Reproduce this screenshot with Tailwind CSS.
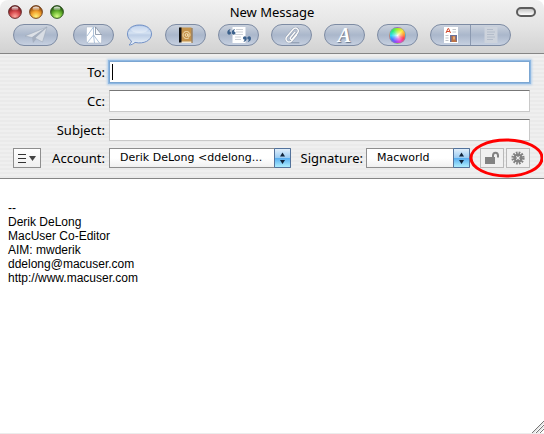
<!DOCTYPE html>
<html lang="en">
<head>
<meta charset="utf-8">
<meta name="viewport" content="width=device-width, initial-scale=1">
<title>New Message</title>
<script src="https://cdn.jsdelivr.net/npm/@tailwindcss/browser@4"></script>
</head>
<body class="bg-white">
<main class="flex h-screen flex-col overflow-hidden bg-white font-['Noto_Sans','Open_Sans',sans-serif] text-[13px] text-black">

  <header class="rounded-t-lg border-b border-[#858585] bg-linear-to-b from-[#f1f1f1] via-[#e4e4e4] to-[#d2d2d2]">
    <div class="grid h-6 grid-cols-[1fr_auto_1fr] items-center px-2">
      <div class="flex gap-[7px]">
        <button aria-label="Close" class="size-[14px]"><svg viewBox="0 0 14 14" class="block size-full">
          <defs>
            <radialGradient id="red" cx=".5" cy=".85" r=".8"><stop offset="0" stop-color="#ffaaa0"/><stop offset=".5" stop-color="#d6484b"/><stop offset="1" stop-color="#641114"/></radialGradient>
            <radialGradient id="amber" cx=".5" cy=".85" r=".8"><stop offset="0" stop-color="#fff27c"/><stop offset=".5" stop-color="#f2a02c"/><stop offset="1" stop-color="#7a3407"/></radialGradient>
            <radialGradient id="green" cx=".5" cy=".85" r=".8"><stop offset="0" stop-color="#d5ff86"/><stop offset=".5" stop-color="#68b52f"/><stop offset="1" stop-color="#144406"/></radialGradient>
            <linearGradient id="shine" x2="0" y2="1"><stop offset="0" stop-color="#fff" stop-opacity=".95"/><stop offset="1" stop-color="#fff" stop-opacity=".1"/></linearGradient>
          </defs>
          <circle cx="7" cy="7" r="6.4" fill="url(#red)" stroke="#5b2525" stroke-width=".9"/><ellipse cx="7" cy="3.5" rx="3.4" ry="2" fill="url(#shine)"/></svg></button>
        <button aria-label="Minimize" class="size-[14px]"><svg viewBox="0 0 14 14" class="block size-full"><circle cx="7" cy="7" r="6.4" fill="url(#amber)" stroke="#6b3d18" stroke-width=".9"/><ellipse cx="7" cy="3.5" rx="3.4" ry="2" fill="url(#shine)"/></svg></button>
        <button aria-label="Zoom" class="size-[14px]"><svg viewBox="0 0 14 14" class="block size-full"><circle cx="7" cy="7" r="6.4" fill="url(#green)" stroke="#284e1a" stroke-width=".9"/><ellipse cx="7" cy="3.5" rx="3.4" ry="2" fill="url(#shine)"/></svg></button>
      </div>
      <h1 class="leading-5">New Message</h1>
      <button aria-label="Hide toolbar" class="h-[10px] w-5 justify-self-end rounded-full border-2 border-[#5c5c5c] bg-linear-to-b from-[#c4c4c4] to-white"></button>
    </div>

    <nav aria-label="Toolbar" class="flex gap-3 px-[13px] pb-[7px]">
      <button aria-label="Send" class="mr-[3px] flex h-[22px] w-[45px] items-center justify-center rounded-full border border-[#7d8ba3] bg-linear-to-b from-[#cbd2dd] from-0% via-[#aab7cb] via-50% to-[#c6d0e0]">
        <svg viewBox="0 0 24 18" class="h-[18px] w-6"><path d="M23 1 1 10l7 1.500z" fill="#dde1e7" stroke="#98a4b5" stroke-width=".5"/><path d="M23 1 8 11.500 9 17l3-3.500z" fill="#a5afbf"/><path d="M23 1 11 12l7.500 4z" fill="#d8dde4" stroke="#98a4b5" stroke-width=".5"/></svg>
      </button>
      <button aria-label="Chat invitation" class="flex h-[22px] w-[41px] items-center justify-center rounded-full border border-[#7d8ba3] bg-linear-to-b from-[#cbd2dd] from-0% via-[#aab7cb] via-50% to-[#c6d0e0]">
        <svg viewBox="0 0 18 18" class="size-[18px]"><path d="M1.500 1H11l5.500 6.500V17h-15z" fill="#fff" stroke="#a9b5c7" stroke-width=".5"/><path d="M8.500 1 2 10M2 17l6.500-8 6 8M8.500 1v8l1 8" stroke="#9bb4d1" stroke-width=".8" fill="none"/><path d="M10.500 1v7.500h6z" fill="#f5f8fc" stroke="#6d7d92" stroke-width=".7"/></svg>
      </button>
      <button aria-label="Chat" class="h-[22px] w-[27px]">
        <svg viewBox="0 0 27 22" class="block size-full"><defs><linearGradient id="bubble" x2="0" y2="1"><stop offset="0" stop-color="#9db9e3"/><stop offset=".4" stop-color="#d5e2f2"/><stop offset=".5" stop-color="#bdcee6"/><stop offset="1" stop-color="#edf4fb"/></linearGradient></defs><path d="M13.500 1C6 1 1.500 5 1.500 10c0 3 1.500 5.500 4 7-.3 1.500-1.200 3-2.500 4 2.500 0 4.600-1.200 6-2.600 9 2 16.500-2 16.500-8.400C25.500 5 21 1 13.500 1z" fill="url(#bubble)" stroke="#7291c6" stroke-width="1"/><ellipse cx="13.500" cy="5.500" rx="8.500" ry="3.500" fill="#fff" opacity=".35"/></svg>
      </button>
      <button aria-label="Address book" class="flex h-[22px] w-[41px] items-center justify-center rounded-full border border-[#7d8ba3] bg-linear-to-b from-[#cbd2dd] from-0% via-[#aab7cb] via-50% to-[#c6d0e0]">
        <svg viewBox="0 0 16 18" class="h-[18px] w-4"><path d="M2 1.500h11.500v15H2z" fill="#c3924b"/><path d="M2 15.500h12v1.500H2z" fill="#f2ead8"/><path d="M13.500 2h1v15h-1z" fill="#8c6530"/><path d="M1 1.500h2.500v15H1z" fill="#111"/><g fill="none" stroke="#f7e6bd" stroke-width=".9"><circle cx="8.500" cy="9" r="1.400"/><path d="M10 7.500v2.300c.2 1.500 2 .8 2-.8 0-2.200-1.500-3.500-3.500-3.500S5 6.800 5 9s1.500 3.500 3.500 3.500c1 0 1.800-.2 2.500-.7"/></g></svg>
      </button>
      <button aria-label="Quote selection" class="flex h-[22px] w-[41px] items-center justify-center rounded-full border border-[#7d8ba3] bg-linear-to-b from-[#cbd2dd] from-0% via-[#aab7cb] via-50% to-[#c6d0e0]">
        <svg viewBox="0 0 24 18" class="h-[18px] w-6"><path d="M5.500 1h13v16h-13z" fill="#fff"/><path d="M9 3.500h7M9 6h7M8 8.500h8M8 11h6M8 13.500h6" stroke="#c6cad0" stroke-width=".9"/><path d="M3.500 3C1.500 3.300.3 4.700.3 6.500c0 1.300.8 2.200 1.800 2.200S4 8 4 7s-.7-1.500-1.600-1.500C2.500 4.600 3.200 4 3.500 3zM8 3C6 3.300 4.800 4.700 4.800 6.500c0 1.300.8 2.200 1.800 2.200S8.500 8 8.500 7s-.7-1.500-1.600-1.500C7 4.600 7.700 4 8 3zM16.500 16c2-.3 3.200-1.700 3.200-3.500 0-1.300-.8-2.200-1.800-2.200S16 11 16 12s.7 1.500 1.600 1.500c-.1.900-.8 1.500-1.100 2.500zM20.800 16c2-.3 3.200-1.700 3.200-3.500 0-1.300-.8-2.200-1.800-2.200s-1.900.7-1.900 1.700.7 1.500 1.600 1.500c-.1.900-.8 1.500-1.100 2.500z" fill="#3c618c"/></svg>
      </button>
      <button aria-label="Attach" class="flex h-[22px] w-[41px] items-center justify-center rounded-full border border-[#7d8ba3] bg-linear-to-b from-[#cbd2dd] from-0% via-[#aab7cb] via-50% to-[#c6d0e0]">
        <svg viewBox="0 0 18 18" class="size-[18px]" fill="none" stroke-linecap="round"><path d="M7 16.800h9" stroke="#8593a8"/><path d="M12 6 7.500 11.500c-1 1.400.8 2.800 2 1.500L14.500 7C17 3.500 12.800.3 10 3.500L4 10.500c-3 4 2 7.500 5 4L13.500 9" stroke="#8793a6" stroke-width="2.200"/><path d="M12 6 7.500 11.500c-1 1.400.8 2.800 2 1.500L14.500 7C17 3.500 12.800.3 10 3.500L4 10.500c-3 4 2 7.500 5 4L13.500 9" stroke="#fafafa" stroke-width="1.500"/></svg>
      </button>
      <button aria-label="Fonts" class="flex h-[22px] w-[41px] items-center justify-center rounded-full border border-[#7d8ba3] bg-linear-to-b from-[#cbd2dd] from-0% via-[#aab7cb] via-50% to-[#c6d0e0] font-['Liberation_Serif',serif] text-xl leading-5 font-bold text-white italic text-shadow-[1px_1px_1px_#66758c]">A</button>
      <button aria-label="Colors" class="flex h-[22px] w-[41px] items-center justify-center rounded-full border border-[#7d8ba3] bg-linear-to-b from-[#cbd2dd] from-0% via-[#aab7cb] via-50% to-[#c6d0e0]">
        <span class="size-[17px] rounded-full border border-[#8b8fa5]/60 bg-[radial-gradient(circle,#ffffffee_0%,#ffffff66_30%,transparent_60%),conic-gradient(#a4ee20,#ffe838_45deg,#ff9a30_80deg,#ff3d53_115deg,#ee43ce_155deg,#9646f5_195deg,#407aff_235deg,#27d9f0_270deg,#27ec72_315deg,#a4ee20)]"></span>
      </button>
      <div class="flex h-[22px] w-[81px] divide-x divide-[#8b99b0] rounded-full border border-[#7d8ba3] bg-linear-to-b from-[#cbd2dd] from-0% via-[#aab7cb] via-50% to-[#c6d0e0]">
        <button aria-label="Rich text" class="flex flex-1 items-center justify-center">
          <svg viewBox="0 0 14 18" class="h-[18px] w-[14px]"><path d="M0 1h14v16H0z" fill="#fff"/><path d="m2 7 2-4.500h.6L6.500 7M2.800 5.500h3" fill="none" stroke="#d34a2d" stroke-width="1"/><path d="M8.500 3.500H12M8.500 6H12M1.500 9.500h3M1.500 12h3M1.500 14.500h3" stroke="#b9bcc2" stroke-width=".9"/><path d="M6 9h7v7H6z" fill="#69719b"/><path d="M7.500 10h4v3l1.500 3H7.500z" fill="#bd7245"/><path d="M9 10.500h2v3H9z" fill="#e7aa77"/></svg>
        </button>
        <button aria-label="Plain text" class="flex flex-1 items-center justify-center">
          <svg viewBox="0 0 14 18" class="h-[18px] w-[14px]"><path d="M.5 1h13v16H.5z" fill="#cdd3dc"/><path d="M3 3.500h6M3 6h8M3 8.500h7M3 11h8M3 13.500h6" stroke="#b0b9c7" stroke-width=".9"/></svg>
        </button>
      </div>
    </nav>
  </header>

  <form class="flex flex-col gap-[7px] border-b border-[#858585] bg-[repeating-linear-gradient(to_bottom,#efefef_0px,#efefef_2px,#eaeaea_2px,#eaeaea_4px)] pt-[7px] pr-[14px] pb-[10px] pl-[13px]">
    <div class="grid grid-cols-[92px_1fr] items-center gap-1">
      <label for="to" class="text-right leading-5">To:</label>
      <div class="relative">
        <input id="to" type="text" class="block h-[22px] w-full border border-[#7ba6d2] bg-white px-1 shadow-[0_0_0_1px_#8fb8e2,0_0_2px_2px_#b4d0ec] outline-none">
        <span class="pointer-events-none absolute top-[3px] left-[3px] h-4 w-px bg-black"></span>
      </div>
    </div>
    <div class="grid grid-cols-[92px_1fr] items-center gap-1">
      <label for="cc" class="text-right leading-5">Cc:</label>
      <input id="cc" type="text" class="h-[22px] w-full border border-[#c9c9c9] border-t-[#777] bg-white px-1 outline-none">
    </div>
    <div class="grid grid-cols-[92px_1fr] items-center gap-1">
      <label for="subject" class="text-right leading-5">Subject:</label>
      <input id="subject" type="text" class="h-[22px] w-full border border-[#c9c9c9] border-t-[#777] bg-white px-1 outline-none">
    </div>
    <div class="flex items-center">
      <div class="mr-1 flex w-[92px] items-center justify-between">
        <button type="button" aria-label="Customize headers" class="flex h-5 w-7 items-center justify-center border border-[#8e8e8e] bg-linear-to-b from-white to-[#efefef]">
          <svg viewBox="0 0 20 10" class="h-[10px] w-5"><path d="M1 1.500h8M1 5.500h8M1 9.500h8" stroke="#333" stroke-width="1"/><path d="M12 3h7l-3.500 5z" fill="#444"/></svg>
        </button>
        <label for="account" class="leading-5">Account:</label>
      </div>
      <div class="relative min-w-0 flex-1">
        <select id="account" class="block h-5 w-full appearance-none border border-[#8e8e8e] bg-linear-to-b from-white from-50% to-[#f0f0f0] pr-5 pl-[10px] font-['DejaVu_Sans',sans-serif] text-[11px] leading-4 outline-none"><option>Derik DeLong &lt;ddelong...</option></select>
        <svg viewBox="0 0 17 20" class="pointer-events-none absolute top-0 right-0 h-5 w-[17px]"><defs><linearGradient id="cap" x2="0" y2="1"><stop offset="0" stop-color="#e4f0fb"/><stop offset=".48" stop-color="#9bccf3"/><stop offset=".52" stop-color="#58aef0"/><stop offset="1" stop-color="#b3f2ff"/></linearGradient></defs><path d="M.5.500h16v19H.5z" fill="url(#cap)" stroke="#53729b"/><path d="M8.500 4.500 11 8.500H6zM8.500 16 6 12h5z" fill="#102239"/></svg>
      </div>
      <label for="signature" class="mr-[3px] ml-[10px] leading-5">Signature:</label>
      <div class="relative w-[104px]">
        <select id="signature" class="block h-5 w-full appearance-none border border-[#8e8e8e] bg-linear-to-b from-white from-50% to-[#f0f0f0] pr-5 pl-[10px] font-['DejaVu_Sans',sans-serif] text-[11px] leading-4 outline-none"><option>Macworld</option></select>
        <svg viewBox="0 0 17 20" class="pointer-events-none absolute top-0 right-0 h-5 w-[17px]"><path d="M.5.500h16v19H.5z" fill="url(#cap)" stroke="#53729b"/><path d="M8.500 4.500 11 8.500H6zM8.500 16 6 12h5z" fill="#102239"/></svg>
      </div>
      <div class="relative ml-[10px] flex gap-[2px]">
        <button type="button" aria-label="Encrypt" class="flex h-5 w-6 items-center justify-center border border-[#b9b9b9] bg-[#f0f0f0]">
          <svg viewBox="0 0 16 14" class="h-[14px] w-4"><path d="M1 6h10v7H1z" fill="#828282"/><path d="M9 7V4.500C9 2.500 10 1.700 11.500 1.700s2.500.8 2.500 2.800v2" fill="none" stroke="#828282" stroke-width="2"/></svg>
        </button>
        <button type="button" aria-label="Sign" class="flex h-5 w-6 items-center justify-center border border-[#b9b9b9] bg-[#f0f0f0]">
          <svg viewBox="0 0 14 14" class="size-[14px]"><circle cx="7" cy="7" r="5.300" fill="none" stroke="#828282" stroke-width="2.600" stroke-dasharray="1.665 1.110"/><circle cx="7" cy="7" r="4.600" fill="#828282"/><path d="m5.300 5.300 3.400 3.400M8.700 5.300 5.300 8.700" stroke="#efefef" stroke-width="1.200"/></svg>
        </button>
        <svg viewBox="0 0 74 40" class="pointer-events-none absolute -top-[10px] -left-[11px] h-10 w-[74px] max-w-none"><ellipse cx="37.500" cy="20" rx="35.500" ry="18" fill="none" stroke="#f00" stroke-width="3"/></svg>
      </div>
    </div>
  </form>

  <div class="relative flex min-h-0 flex-1 border-b border-[#ececec]">
    <textarea aria-label="Message body" spellcheck="false" class="w-full flex-1 resize-none bg-white p-2 font-['Liberation_Sans',Arial,sans-serif] text-xs leading-[14px] outline-none">

--
Derik DeLong
MacUser Co-Editor
AIM: mwderik
ddelong@macuser.com
http://www.macuser.com</textarea>
    <svg viewBox="0 0 12 12" class="pointer-events-none absolute right-0 bottom-0 size-3" stroke="#777" stroke-width="1"><path d="M0 12 12 0M4 12l8-8M8 12l4-4"/><path d="M1.500 12 12 1.500M5.500 12 12 5.500" stroke="#d0d0d0"/></svg>
  </div>
</main>
</body>
</html>
